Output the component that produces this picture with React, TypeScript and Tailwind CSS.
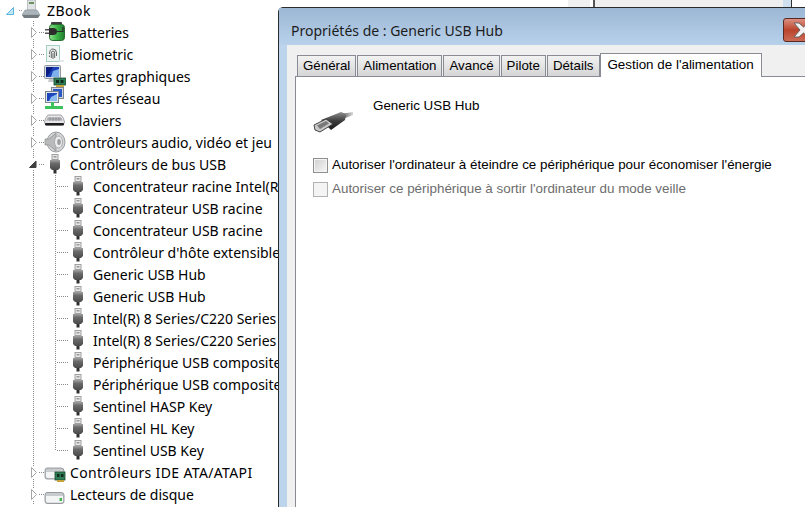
const Dots = ({ x, y, w = 1, h = 1 }: { x: number; y: number; w?: number; h?: number }) => {
  // one pixel dots, every second pixel
  const out = [];
  if (w > 1) {
    for (let i = 0; i < w; i += 2) out.push(<rect key={i} x={x + i} y={y} width="1" height="1" fill="#8a8a8a" />);
  } else {
    for (let i = 0; i < h; i += 2) out.push(<rect key={i} x={x} y={y + i} width="1" height="1" fill="#8a8a8a" />);
  }
  return <>{out}</>;
};

const Expander = ({ open }: { open?: boolean }) =>
  open ? (
    <path d="M29.5 14.5 L36 14.5 L36 8 Z" fill="#404040" stroke="#404040" strokeWidth="1" />
  ) : (
    <path d="M31.5 6.5 L31.5 16.5 L36.5 11.5 Z" fill="#fff" stroke="#a6a6a6" strokeWidth="1" />
  );

const GroupGutter = ({ open }: { open?: boolean }) => (
  <svg width="44" height="22" className="shrink-0">
    <Dots x={33} y={0} h={5} />
    {!open && <Dots x={33} y={18} h={4} />}
    {open && <Dots x={33} y={17} h={5} />}
    <Dots x={39} y={11} w={5} />
    <Expander open={open} />
  </svg>
);

const ChildGutter = ({ last }: { last?: boolean }) => (
  <svg width="70" height="22" className="shrink-0">
    <Dots x={33} y={0} h={22} />
    <Dots x={55} y={0} h={last ? 11 : 22} />
    <Dots x={57} y={11} w={12} />
  </svg>
);

const UsbIcon = () => (
  <svg width="16" height="22" viewBox="0 0 16 22" className="shrink-0">
    <defs>
      <linearGradient id="usbBody" x1="0" y1="0" x2="0" y2="1">
        <stop offset="0" stopColor="#a2a2a2" />
        <stop offset="0.35" stopColor="#6a6a6a" />
        <stop offset="1" stopColor="#4a4a4a" />
      </linearGradient>
    </defs>
    <rect x="5" y="1.5" width="6" height="5" fill="#e8e8e8" stroke="#a0a0a0" />
    <rect x="6.5" y="3" width="3" height="1.5" fill="#9a9a9a" />
    <path d="M3 7 H13 V15 L11 17 H5 L3 15 Z" fill="url(#usbBody)" />
    <rect x="6.5" y="17" width="3" height="3.5" fill="#2f2f2f" />
  </svg>
);

const BatteryIcon = () => (
  <svg width="22" height="22" viewBox="0 0 22 22" className="shrink-0">
    <defs>
      <linearGradient id="batt" x1="0" y1="0" x2="1" y2="0">
        <stop offset="0" stopColor="#8fe08a" />
        <stop offset="0.5" stopColor="#3cb648" />
        <stop offset="1" stopColor="#1f7a2c" />
      </linearGradient>
    </defs>
    <rect x="7" y="1" width="11" height="3" rx="1" fill="#3d3d3d" />
    <rect x="5.5" y="3.5" width="15" height="16" rx="3" fill="url(#batt)" stroke="#2a6a30" />
    <rect x="1" y="8" width="4" height="1.5" fill="#555" />
    <rect x="1" y="11.5" width="4" height="1.5" fill="#555" />
    <path d="M5 7 H9 Q13 7 13 10.5 Q13 14 9 14 H5 Z" fill="#2c2c2c" />
    <path d="M13 10.5 H19 V6" fill="none" stroke="#2c2c2c" strokeWidth="1.2" />
  </svg>
);

const BiometricIcon = () => (
  <svg width="22" height="22" viewBox="0 0 22 22" className="shrink-0">
    <rect x="2.5" y="2.5" width="13" height="16" fill="#eef6f3" stroke="#a8cfc6" />
    <rect x="15" y="17" width="5" height="2" fill="#e3e6ea" />
    <g fill="none" stroke="#555" strokeWidth="0.9">
      <path d="M5.5 11 Q5.5 6 9 6 Q12.5 6 12.5 10 V13" />
      <path d="M7.3 15 V10.5 Q7.3 8 9 8 Q10.7 8 10.7 10.5 V15" />
      <path d="M9 10 V16" />
      <path d="M5.5 14 V12.5" />
    </g>
  </svg>
);

const DisplayIcon = () => (
  <svg width="22" height="22" viewBox="0 0 22 22" className="shrink-0">
    <rect x="0.5" y="0.5" width="16" height="13" rx="1" fill="#d8dde2" stroke="#8f979e" />
    <rect x="2" y="2" width="13" height="10" fill="#1b3fb8" />
    <path d="M2 2 H9 L5 9 L2 12 Z" fill="#0a1f80" />
    <path d="M9 6 L15 4 V12 H7 Z" fill="#7fb2ec" />
    <path d="M5 14 H12 L13 17 H4 Z" fill="#c4c8cc" />
    <rect x="10" y="13" width="12" height="7" fill="#2e7d55" stroke="#1a4d33" strokeWidth="0.8" />
    <rect x="12" y="15" width="3" height="3" fill="#0f2c1c" />
    <rect x="16.5" y="15" width="3" height="3" fill="#0f2c1c" />
    <rect x="12" y="20" width="8" height="2" fill="#c9a23a" />
  </svg>
);

const NetworkIcon = () => (
  <svg width="22" height="22" viewBox="0 0 22 22" className="shrink-0">
    <rect x="7.5" y="0.5" width="12" height="11" fill="#cfd6dc" stroke="#7d868e" />
    <rect x="9" y="2" width="9" height="8" fill="#2a58c8" />
    <rect x="1.5" y="4.5" width="13" height="11" fill="#e1e5e9" stroke="#7d868e" />
    <rect x="3" y="6" width="10" height="8" fill="#1d46bc" />
    <path d="M7 10 L13 7 V14 H5 Z" fill="#8cbcef" />
    <rect x="7" y="15" width="3" height="4" fill="#3ec25c" />
    <rect x="1" y="19" width="18" height="3" fill="#3ec25c" />
  </svg>
);

const KeyboardIcon = () => (
  <svg width="22" height="22" viewBox="0 0 22 22" className="shrink-0">
    <path d="M4 6 H17 Q20 9 20.5 13 Q20 16 18 16 H3 Q1 16 0.5 13 Q1 9 4 6 Z" fill="#e8e8ea" stroke="#8e8e92" strokeWidth="0.8" />
    <path d="M4 8 H17 L19 12 H2 Z" fill="#c3c5cb" />
    <g stroke="#777" strokeWidth="0.6">
      <path d="M3 10 H18" />
      <path d="M6 8 V12 M9 8 V12 M12 8 V12 M15 8 V12" />
    </g>
    <rect x="1" y="14" width="19" height="2.5" rx="1" fill="#1d1d1f" />
  </svg>
);

const SpeakerIcon = () => (
  <svg width="22" height="22" viewBox="0 0 22 22" className="shrink-0">
    <ellipse cx="12" cy="11" rx="9" ry="10" fill="#d4d6d8" stroke="#9a9c9e" />
    <path d="M1 8 H5 L12 2 V20 L5 14 H1 Z" fill="#b8babc" stroke="#8a8c8e" strokeWidth="0.7" />
    <ellipse cx="14.5" cy="11" rx="4" ry="6" fill="#eceded" stroke="#a8aaac" />
    <ellipse cx="15" cy="11" rx="1.8" ry="3" fill="#9a9c9e" />
  </svg>
);

const DriveIcon = ({ board }: { board?: boolean }) => (
  <svg width="22" height="22" viewBox="0 0 22 22" className="shrink-0">
    {board ? (
      <>
        <path d="M3 7 H17 Q20 7 20 10 V16 Q20 18 18 18 H3 Q1 18 1 16 V10 Q1 7 3 7 Z" fill="#c9ccce" stroke="#84888b" strokeWidth="0.8" />
        <path d="M2 11 H19 V15 Q19 17 17 17 H4 Q2 17 2 15 Z" fill="#f3f4f4" />
        <rect x="11" y="11" width="10" height="8" fill="#2e7d55" stroke="#1a4d33" strokeWidth="0.8" />
        <rect x="13" y="13" width="2.5" height="3" fill="#0f2c1c" />
        <rect x="17" y="13" width="2.5" height="3" fill="#0f2c1c" />
        <rect x="13" y="19" width="7" height="2" fill="#c9a23a" />
      </>
    ) : (
      <>
        <path d="M3 9.5 H17 Q20 9.5 20 12 V18 Q20 20.5 18 20.5 H3 Q1 20.5 1 18 V12 Q1 9.5 3 9.5 Z" fill="#c9ccce" stroke="#84888b" strokeWidth="0.8" />
        <path d="M2 13 H19 V18 Q19 19.5 17 19.5 H4 Q2 19.5 2 18 Z" fill="#f3f4f4" />
        <rect x="15.5" y="15" width="2.5" height="3" fill="#45b54d" />
      </>
    )}
  </svg>
);

const ComputerIcon = () => (
  <svg width="22" height="22" viewBox="0 0 22 22" className="shrink-0">
    <rect x="5.5" y="1" width="8" height="10" fill="#dfe3e6" stroke="#9ba0a4" strokeWidth="0.6" />
    <rect x="7" y="3" width="5" height="2" fill="#6c8f5c" />
    <path d="M3 11 H15 L18 16 H0 Z" fill="#a9b4bb" stroke="#8b949a" strokeWidth="0.6" />
    <path d="M0 16 H18 L16 19 H2 Z" fill="#737b80" />
  </svg>
);

const GroupRow = ({ label, icon, open, wide }: { label: string; icon: React.ReactNode; open?: boolean; wide?: boolean }) => (
  <div className="flex h-[22px] items-center">
    <GroupGutter open={open} />
    {icon}
    <span className={wide ? "mt-[2px] ml-1 tracking-[0.36px] whitespace-nowrap" : "mt-[2px] ml-1 whitespace-nowrap"}>{label}</span>
  </div>
);

const ChildRow = ({ label, last }: { label: string; last?: boolean }) => (
  <div className="flex h-[22px] items-center">
    <ChildGutter last={last} />
    <UsbIcon />
    <span className="mt-[2px] ml-[7px] whitespace-nowrap">{label}</span>
  </div>
);

const usbChildren = [
  "Concentrateur racine Intel(R)",
  "Concentrateur USB racine",
  "Concentrateur USB racine",
  "Contrôleur d'hôte extensible",
  "Generic USB Hub",
  "Generic USB Hub",
  "Intel(R) 8 Series/C220 Series",
  "Intel(R) 8 Series/C220 Series",
  "Périphérique USB composite",
  "Périphérique USB composite",
  "Sentinel HASP Key",
  "Sentinel HL Key",
  "Sentinel USB Key",
];

const tabs = ["Général", "Alimentation", "Avancé", "Pilote", "Détails"];

const Tree = () => (
  <div className="mt-[-1px] w-[278px] shrink-0 overflow-hidden font-['Noto_Sans',sans-serif] text-[14px] leading-[22px] text-black">
    <div className="flex h-[22px] items-center">
      <svg width="22" height="22" className="shrink-0">
        <path d="M6.5 15.5 L13.5 15.5 L13.5 8.5 Z" fill="#c5e7f6" stroke="#55b4e0" />
        <Dots x={19} y={11} w={3} />
      </svg>
      <ComputerIcon />
      <span className="mt-[2px] ml-[3px] tracking-[0.5px]">ZBook</span>
    </div>
    <GroupRow label="Batteries" icon={<BatteryIcon />} />
    <GroupRow label="Biometric" icon={<BiometricIcon />} />
    <GroupRow label="Cartes graphiques" icon={<DisplayIcon />} />
    <GroupRow label="Cartes réseau" icon={<NetworkIcon />} />
    <GroupRow label="Claviers" icon={<KeyboardIcon />} />
    <GroupRow label="Contrôleurs audio, vidéo et jeu" icon={<SpeakerIcon />} />
    <div className="flex h-[22px] items-center">
      <GroupGutter open />
      <div className="flex w-[22px] justify-center">
        <UsbIcon />
      </div>
      <span className="mt-[2px] ml-1 whitespace-nowrap">Contrôleurs de bus USB</span>
    </div>
    {usbChildren.map((label, i) => (
      <ChildRow key={i} label={label} last={i === usbChildren.length - 1} />
    ))}
    <GroupRow label="Contrôleurs IDE ATA/ATAPI" icon={<DriveIcon board />} wide />
    <GroupRow label="Lecteurs de disque" icon={<DriveIcon />} />
  </div>
);

const UsbPlug = () => (
  <svg width="40" height="24" viewBox="0 0 40 24">
    <defs>
      <linearGradient id="plug" x1="0" y1="0" x2="0" y2="1">
        <stop offset="0" stopColor="#8f8f8f" />
        <stop offset="0.5" stopColor="#3c3c3c" />
        <stop offset="1" stopColor="#1a1a1a" />
      </linearGradient>
      <linearGradient id="tail" x1="0" y1="0" x2="1" y2="0">
        <stop offset="0" stopColor="#555" />
        <stop offset="1" stopColor="#d8d8d8" />
      </linearGradient>
    </defs>
    <path d="M28 4 L40 2 L40 5 L30 9 Z" fill="url(#tail)" />
    <path d="M8 10 L28 2 L33 4 L32 10 L18 20 Z" fill="url(#plug)" />
    <path d="M1 15 L13 9 L20 14 L7 22 L2 20 Z" fill="#c8c8c8" stroke="#333" strokeWidth="0.9" />
    <path d="M4 15.5 L13 11 L16 13.5 L7 19 Z" fill="#7a7a7a" />
  </svg>
);

const Dialog = () => (
  <div className="absolute top-[7px] left-[278px] flex h-[520px] w-[560px] flex-col rounded-t-[5px] border border-[#2b2b2b] bg-[#bcd4ec] font-['Liberation_Sans',sans-serif] text-[13.4px] text-black">
    <div className="flex h-[37px] shrink-0 items-start justify-between bg-gradient-to-b from-[#9cb7d4] to-[#b8d1eb] pl-[12px]">
      <span className="mt-[13px] font-['Noto_Sans',sans-serif] text-[14px] leading-[20px] text-[#1c1c1c]">Propriétés de : Generic USB Hub</span>
      <div className="mt-[10px] mr-[7px] h-[24px] w-[47px] overflow-hidden rounded-[3px] border border-[#5a2a22] bg-gradient-to-b from-[#dc8f82] via-[#b9432a] to-[#cc6a55]">
        <svg width="30" height="22" viewBox="0 0 30 22">
          <path d="M10 4 H15 L19.5 8 L24 4 H29 L23 11 L29 18 H24 L19.5 14 L15 18 H10 L16 11 Z" fill="#f2f2f2" stroke="#5d5d5d" strokeWidth="0.9" />
        </svg>
      </div>
    </div>
    <div className="ml-[8px] flex flex-1 flex-col bg-[#f0f0f0] pt-[8px] pl-[8px]">
      <div className="flex h-[23px] items-end gap-[1px] pl-[2px] text-[13.3px]">
        {tabs.map((t) => (
          <div
            key={t}
            className="flex h-[21px] items-center border border-b-0 border-[#898c95] bg-gradient-to-b from-[#f2f2f2] to-[#d5d5d5] px-[5px]"
          >
            {t}
          </div>
        ))}
        <div className="relative z-10 mb-[-1px] ml-[-1px] flex h-[24px] w-[162px] items-center justify-center border border-b-0 border-[#898c95] bg-white pb-[1px] text-[13.4px]">
          Gestion de l'alimentation
        </div>
      </div>
      <div className="flex-1 border-t border-l border-[#898c95] bg-white pt-[15px] pl-[17px]">
        <div className="flex h-[50px]">
          <div className="w-[60px] pt-[18px]">
            <UsbPlug />
          </div>
          <span className="mt-[4px]">Generic USB Hub</span>
        </div>
        <div className="mt-[11px] flex h-[24px] items-center gap-[4px]">
          <span className="h-[15px] w-[15px] border border-[#8e8f8f] bg-gradient-to-br from-[#d0d0d2] to-[#f7f7f8] shadow-[inset_0_0_0_1px_#f4f4f4]" />
          <span>Autoriser l'ordinateur à éteindre ce périphérique pour économiser l'énergie</span>
        </div>
        <div className="flex h-[24px] items-center gap-[4px] text-[#6d6d6d]">
          <span className="h-[15px] w-[15px] border border-[#b1b1b1] bg-[#f4f4f4]" />
          <span>Autoriser ce périphérique à sortir l'ordinateur du mode veille</span>
        </div>
      </div>
    </div>
  </div>
);

export default function App() {
  return (
    <div className="relative flex h-[507px] w-[805px] overflow-hidden bg-white">
      <Tree />
      {/* bit of the window behind, visible above the dialog */}
      <div className="flex h-[7px] flex-1 pl-[290px]">
        <div className="h-full w-[22px] bg-[#f0f0f0]" />
        <div className="ml-[3px] h-full w-[2px] bg-[#555]" />
        <div className="h-full w-[188px] bg-[#efefef]" />
        <div className="h-full w-[8px] bg-[#cfe0f0]" />
        <div className="h-full w-[1px] bg-[#333]" />
      </div>
      <Dialog />
    </div>
  );
}
